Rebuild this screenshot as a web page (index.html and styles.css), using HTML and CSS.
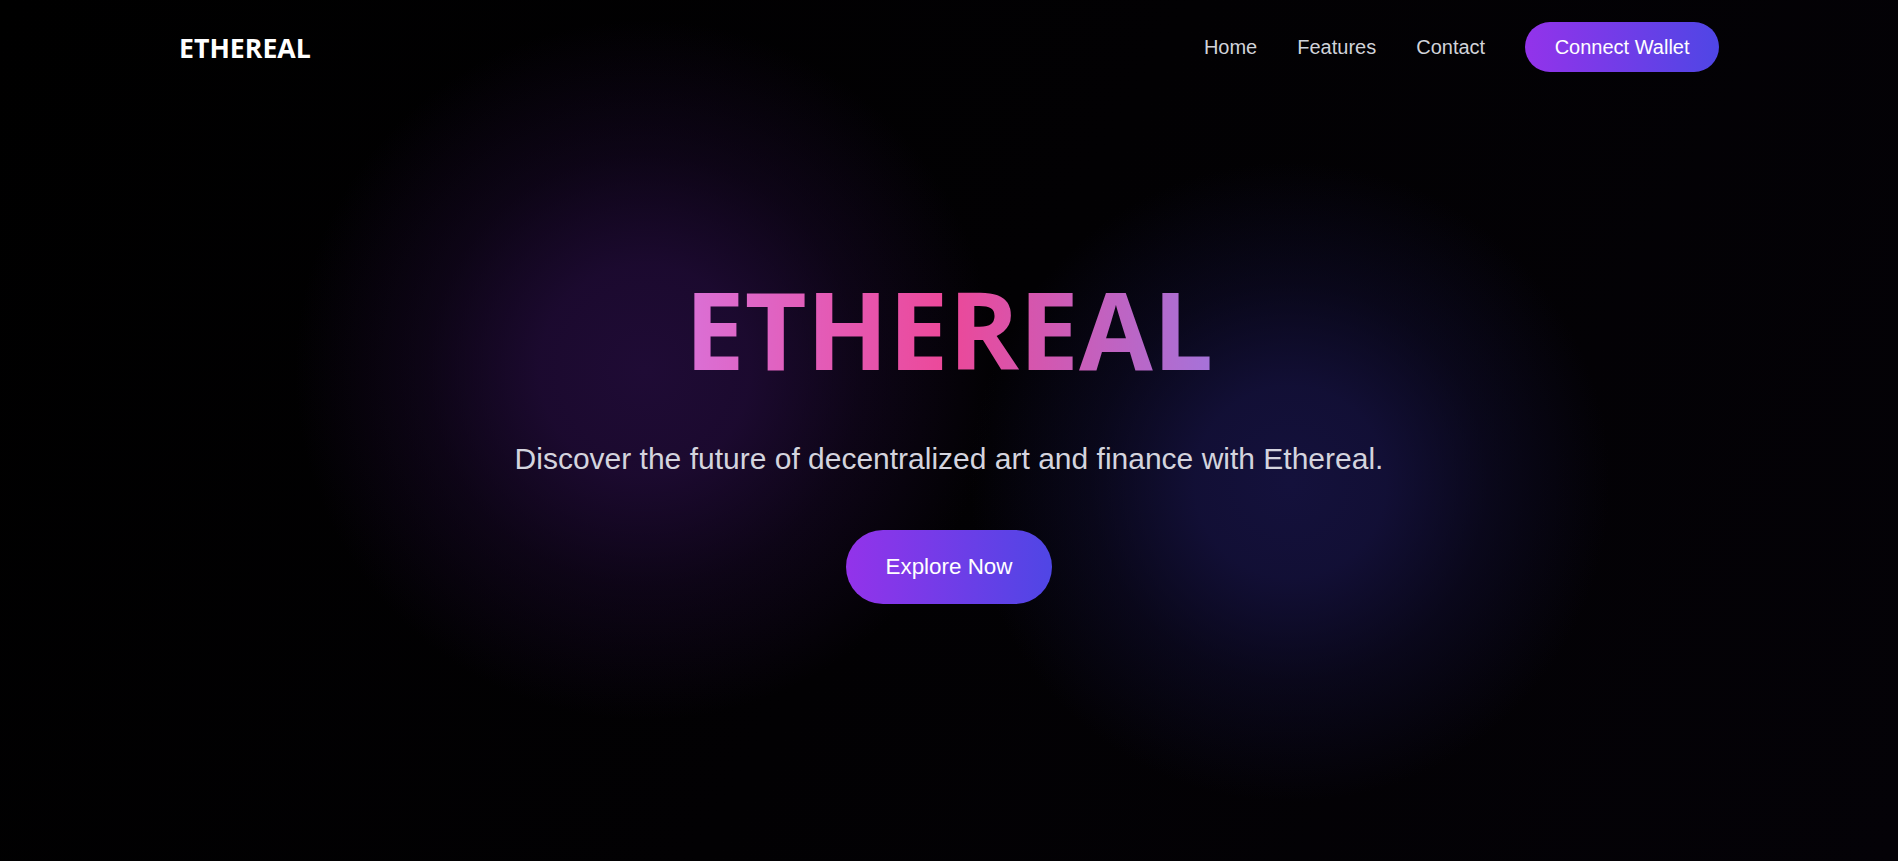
FILE: index.html
```html
<!DOCTYPE html>
<html lang="en">
<head>
<meta charset="utf-8">
<title>Ethereal</title>
<link rel="stylesheet" href="styles.css">
</head>
<body>
<div class="page">
  <header class="site-header">
    <a class="logo" href="#">ETHEREAL</a>
    <nav class="nav">
      <a class="nav-link" href="#">Home</a>
      <a class="nav-link" href="#">Features</a>
      <a class="nav-link" href="#">Contact</a>
      <a class="btn btn-wallet" href="#">Connect Wallet</a>
    </nav>
  </header>
  <main class="hero">
    <h1 class="hero-title">ETHEREAL</h1>
    <p class="hero-sub">Discover the future of decentralized art and finance with Ethereal.</p>
    <a class="btn btn-explore" href="#">Explore Now</a>
  </main>
</div>
</body>
</html>
```
FILE: styles.css
```css
* { box-sizing: border-box; }

html, body {
  margin: 0;
  padding: 0;
  height: 100%;
  background: #000;
}

body {
  font-family: "Liberation Sans", Arial, sans-serif;
  color: #fff;
}

.page {
  min-height: 100vh;
  background:
    radial-gradient(circle 350px at 645px 370px,
      rgba(31, 11, 53, 1) 0%,
      rgba(31, 11, 53, 0.88) 30%,
      rgba(31, 11, 53, 0.4) 62%,
      rgba(31, 11, 53, 0) 100%),
    radial-gradient(circle 320px at 1290px 482px,
      rgba(20, 17, 60, 1) 0%,
      rgba(20, 17, 60, 0.88) 30%,
      rgba(20, 17, 60, 0.4) 62%,
      rgba(20, 17, 60, 0) 100%),
    linear-gradient(120deg, #000 0%, #020103 50%, #040207 100%);
}

.site-header {
  max-width: 1540px;
  margin: 0 auto;
  padding: 22px 0;
  display: flex;
  align-items: center;
  justify-content: space-between;
}

.logo {
  font-family: "Open Sans", "Noto Sans", sans-serif;
  font-weight: 700;
  font-size: 26.7px;
  color: #fff;
  text-decoration: none;
}

.nav {
  display: flex;
  align-items: center;
  gap: 40px;
}

.nav-link {
  font-size: 20px;
  color: #d1d3da;
  text-decoration: none;
}

.btn {
  display: inline-block;
  color: #fff;
  text-decoration: none;
  border-radius: 9999px;
  background: linear-gradient(90deg, #9333ea 0%, #4f46e5 100%);
}

.btn-wallet {
  font-size: 20px;
  padding: 13.5px 29.5px;
}

.hero {
  display: flex;
  flex-direction: column;
  align-items: center;
  text-align: center;
  padding-top: 171px;
}

.hero-title {
  margin: 0 0 49px;
  font-family: "Open Sans", "Noto Sans", sans-serif;
  font-weight: 700;
  font-size: 107px;
  line-height: 1.2;
  letter-spacing: 0;
  background: linear-gradient(90deg, #da70d6 0%, #ec4899 50%, #a573da 100%);
  -webkit-background-clip: text;
  background-clip: text;
  color: transparent;
}

.hero-sub {
  margin: 0 0 54px;
  font-size: 30px;
  color: #d4d4de;
}

.btn-explore {
  font-size: 22.4px;
  padding: 24px 40px;
}
```
